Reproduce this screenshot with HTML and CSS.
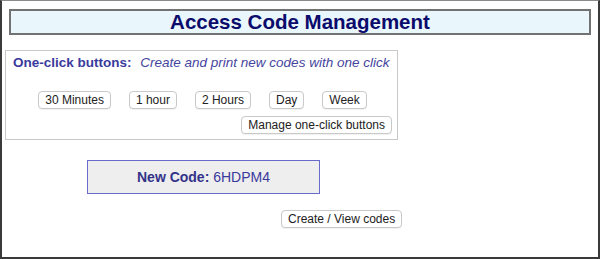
FILE: index.html
```html
<!DOCTYPE html>
<html lang="en">
<head>
    <meta charset="UTF-8">
    <title>Access Code Management</title>
    <link rel="stylesheet" href="styles.css">
</head>
<body>
    <div class="frame">
        <h1 class="page-title">Access Code Management</h1>

        <div class="oneclick">
            <div class="oneclick-head">
                <span class="oneclick-label">One-click buttons:</span>
                <span class="oneclick-hint">Create and print new codes with one click</span>
            </div>
            <div class="oneclick-row">
                <button>30 Minutes</button>
                <button>1 hour</button>
                <button>2 Hours</button>
                <button>Day</button>
                <button>Week</button>
            </div>
            <div class="oneclick-manage">
                <button>Manage one-click buttons</button>
            </div>
        </div>

        <div class="new-code"><b>New Code:</b> 6HDPM4</div>

        <div class="codes-link">
            <button>Create / View codes</button>
        </div>
    </div>
</body>
</html>
```

FILE: styles.css
```css
body {
    margin: 0;
    font-family: "Liberation Sans", Arial, sans-serif;
    background: #fff;
}
.frame {
    width: 600px;
    height: 259px;
    box-sizing: border-box;
    border: 2px solid #3a3a3a;
    border-top: 1px solid #8a8a8a;
    overflow: hidden;
}
.page-title {
    margin: 8px 7px 0 7px;
    height: 26px;
    box-sizing: border-box;
    border: 2px solid #727272;
    background: #e9f6fb;
    color: #0b0b6c;
    font-size: 20.5px;
    line-height: 21px;
    text-align: center;
}
.oneclick {
    margin: 15px 0 0 3px;
    width: 393px;
    height: 90px;
    box-sizing: border-box;
    border: 1px solid #c8c8c8;
    padding: 4px 5px 0 7px;
}
.oneclick-head {
    font-size: 13.5px;
    line-height: 16px;
    color: #3a3a9c;
    white-space: nowrap;
}
.oneclick-label {
    font-weight: bold;
    margin-right: 5px;
}
.oneclick-hint {
    font-style: italic;
    color: #45459e;
}
.oneclick-row {
    display: flex;
    justify-content: center;
    gap: 18px;
    margin-top: 20px;
}
.oneclick-manage {
    display: flex;
    justify-content: flex-end;
    margin-top: 7px;
}
button {
    height: 18px;
    padding: 0 6px;
    border: 1px solid #c9c9c9;
    border-radius: 4px;
    background: #fff;
    color: #222;
    font-family: "Liberation Sans", Arial, sans-serif;
    font-size: 12px;
    line-height: 16px;
    box-shadow: 0 1px 1px rgba(0,0,0,0.06);
    cursor: pointer;
}
.new-code {
    margin: 20px 0 0 85px;
    width: 233px;
    height: 34px;
    box-sizing: border-box;
    border: 1px solid #6a6acb;
    background: #eeeeee;
    color: #3a3a9c;
    font-size: 14px;
    line-height: 32px;
    text-align: center;
}
.new-code b {
    color: #33338a;
}
.codes-link {
    margin: 15px 0 0 279px;
}
```
